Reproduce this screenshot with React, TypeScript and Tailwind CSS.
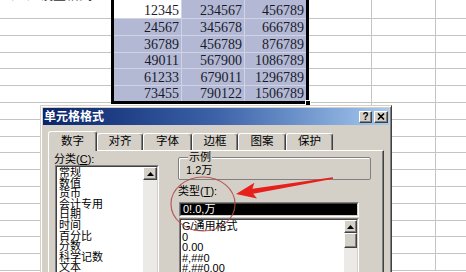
import type { ReactNode } from 'react'

const cells = [
  ['12345', '234567', '456789'],
  ['24567', '345678', '666789'],
  ['36789', '456789', '876789'],
  ['49011', '567900', '1086789'],
  ['61233', '679011', '1296789'],
  ['73455', '790122', '1506789'],
]

const selRowHeights = ['h-[19px]', 'h-[16.8px]', 'h-[16.8px]', 'h-[16.8px]', 'h-[16.8px]', 'h-[14.8px]']
const selColWidths = ['w-[68px] border-r border-[#cfd3e3]', 'w-[63px] border-r border-[#cfd3e3]', 'flex-1']

const categories = ['常规', '数值', '货币', '会计专用', '日期', '时间', '百分比', '分数', '科学记数', '文本', '特殊', '自定义']
const types = ['G/通用格式', '0', '0.00', '#,##0', '#,##0.00', '#,##0;-#,##0']

const tabs = [
  { label: '数字', width: 'w-[49px]', active: true },
  { label: '对齐', width: 'w-[46px]' },
  { label: '字体', width: 'w-[49px]' },
  { label: '边框', width: 'w-[46px]' },
  { label: '图案', width: 'w-[48px]' },
  { label: '保护', width: 'w-[47px]' },
]

const rowIdx = Array.from({ length: 16 }, (_, i) => i)

const bevel =
  'bg-[#d4d0c8] border border-t-white border-l-white border-r-[#404040] border-b-[#404040] shadow-[inset_-1px_-1px_0_#808080]'

function Sunken({ className, children }: { className: string; children: ReactNode }) {
  return (
    <div className={`border border-t-[#808080] border-l-[#808080] border-r-white border-b-white ${className}`}>
      <div className="h-full flex border border-t-[#404040] border-l-[#404040] border-r-[#d4d0c8] border-b-[#d4d0c8]">
        {children}
      </div>
    </div>
  )
}

function UpArrow() {
  return (
    <svg width="7" height="4" viewBox="0 0 7 4">
      <polygon points="3.5,0 7,4 0,4" fill="#000" />
    </svg>
  )
}

function Scrollbar({ width, thumb }: { width: string; thumb?: boolean }) {
  return (
    <div className={`${width} flex flex-col bg-[#ebeae7]`}>
      <div className={`h-[13px] flex items-center justify-center ${bevel}`}>
        <UpArrow />
      </div>
      {thumb && <div className={`h-[15px] ${bevel}`} />}
    </div>
  )
}

export default function App() {
  return (
    <div className="relative w-[466px] h-[272px] overflow-hidden bg-white">
      {/* Spreadsheet */}
      <div className="flex">
        {/* column A */}
        <div className="w-[111px] shrink-0">
          {rowIdx.map((i) => (
            <div
              key={i}
              className={`${i === 0 ? 'h-[19px]' : 'h-[16.8px]'} border-b border-[#c4c4c4] overflow-hidden`}
            >
              {i === 0 && (
                <div className="h-[2px] overflow-hidden">
                  <div className="-mt-[13px] pl-[1px] text-[13px] leading-[13px] text-[#333] font-['Noto_Sans_CJK_SC',sans-serif]">
                    （二）设置格式
                  </div>
                </div>
              )}
            </div>
          ))}
        </div>

        {/* selection */}
        <div className="w-[198px] shrink-0">
          <div className="relative border-x-[3px] border-b-[3px] border-black font-['Liberation_Serif',serif] text-[14px] text-[#1a1a2a]">
            {cells.map((row, r) => (
              <div
                key={r}
                className={`flex ${selRowHeights[r]} ${r < 5 ? 'border-b border-[#cfd3e3]' : ''}`}
              >
                {row.map((v, c) => (
                  <div
                    key={c}
                    className={`${selColWidths[c]} flex items-end justify-end pr-[2px] leading-[14px] overflow-hidden ${
                      r === 0 && c === 0 ? 'bg-white' : 'bg-[#b3b9d5]'
                    }`}
                  >
                    {v}
                  </div>
                ))}
              </div>
            ))}
            <div className="absolute -right-[5px] -bottom-[5px] w-[6px] h-[6px] bg-black border border-white" />
          </div>
        </div>

        {/* columns right */}
        <div className="flex-1">
          {rowIdx.map((i) => (
            <div
              key={i}
              className={`flex ${i === 0 ? 'h-[19px]' : 'h-[16.8px]'} border-b border-[#c4c4c4]`}
            >
              <div className="w-[63px] border-r border-[#c4c4c4]" />
              <div className="w-[64px] border-r border-[#c4c4c4]" />
              <div className="flex-1" />
            </div>
          ))}
        </div>
      </div>

      {/* Format Cells dialog */}
      <div className="absolute left-[40px] top-[105px] w-[352px] h-[190px] bg-[#d4d0c8] border border-t-[#d4d0c8] border-l-[#d4d0c8] border-r-[#404040] border-b-[#404040] shadow-[inset_1px_1px_0_#fff,inset_-1px_-1px_0_#808080] p-[2px] font-['Liberation_Sans','Noto_Sans_CJK_SC',sans-serif] text-black">
        <div className="h-[17px] flex items-center justify-between bg-linear-to-r from-[#0a246a] via-[#3d62a8] to-[#a6caf0] pl-[1px] pr-[1px]">
          <span className="text-white font-bold text-[12px] leading-[12px]">单元格格式</span>
          <div className="flex gap-[2px]">
            <div className={`w-[13px] h-[12px] flex items-center justify-center text-[10px] font-bold leading-none ${bevel}`}>
              ?
            </div>
            <div className={`w-[14px] h-[12px] flex items-center justify-center ${bevel}`}>
              <svg width="8" height="7" viewBox="0 0 8 7">
                <path d="M1 0.5 L7 6.5 M7 0.5 L1 6.5" stroke="#000" strokeWidth="1.6" />
              </svg>
            </div>
          </div>
        </div>

        {/* tabs */}
        <div className="mt-[6px] pl-[5px] h-[19px] flex items-end">
          {tabs.map((t) => (
            <div
              key={t.label}
              className={`${t.width} ${
                t.active ? 'h-[20px] -mb-[1px] relative z-10' : 'h-[17px]'
              } bg-[#d4d0c8] border-t border-l border-t-white border-l-white border-r border-r-[#404040] shadow-[inset_-1px_0_0_#808080] rounded-t-[3px] flex items-center justify-center text-[11.5px] leading-none`}
            >
              {t.label}
            </div>
          ))}
        </div>

        {/* panel */}
        <div className="mx-[5px] h-[140px] border border-t-white border-l-white border-r-[#404040] border-b-[#404040] shadow-[inset_-1px_-1px_0_#808080] flex pl-[6px] pt-[3px] text-[11px]">
          <div className="w-[104px] flex flex-col">
            <div className="h-[11px] leading-[11px] -ml-[1px]">
              分类(<span className="underline">C</span>):
            </div>
            <Sunken className="flex-1 mt-[0px]">
              <div className="flex-1 bg-white pl-[2px] leading-[10.6px] overflow-hidden">
                {categories.map((c) => (
                  <div key={c}>{c}</div>
                ))}
              </div>
              <Scrollbar width="w-[14px]" />
            </Sunken>
          </div>

          <div className="ml-[19px] w-[193px] -mt-[2px] flex flex-col">
            <fieldset className="h-[28px] border border-[#808080] rounded-[2px] shadow-[inset_1px_1px_0_#fff] pl-[7px] pt-[2px]">
              <legend className="ml-[2px] px-[1px] bg-[#d4d0c8] leading-[11px]">示例</legend>
              <div className="leading-[11px]">1.2万</div>
            </fieldset>

            <div className="mt-[6px] leading-[11px]">
              类型(<span className="underline">T</span>):
            </div>
            <Sunken className="mt-[5px] ml-[1px] w-[180px] h-[15px]">
              <div className="flex-1 bg-black text-white pl-[2px] leading-[11px]">0!.0,万</div>
            </Sunken>
            <Sunken className="mt-[1px] ml-[1px] w-[180px] flex-1">
              <div className="flex-1 bg-white pl-[1px] pt-[1px] leading-[10.5px] overflow-hidden">
                {types.map((t) => (
                  <div key={t}>{t}</div>
                ))}
              </div>
              <Scrollbar width="w-[13px]" thumb />
            </Sunken>
          </div>
        </div>
      </div>

      {/* red annotation */}
      <svg className="absolute inset-0 pointer-events-none" width="466" height="272" viewBox="0 0 466 272">
        <ellipse cx="203" cy="204" rx="32" ry="27" fill="none" stroke="#b04848" strokeWidth="1.2" opacity="0.85" />
        <polygon
          points="236,194 254.4,182.8 252.4,188.7 332.9,177.3 333.1,178.7 253.2,193.7 257,198.6"
          fill="#e8201c"
        />
      </svg>
    </div>
  )
}
